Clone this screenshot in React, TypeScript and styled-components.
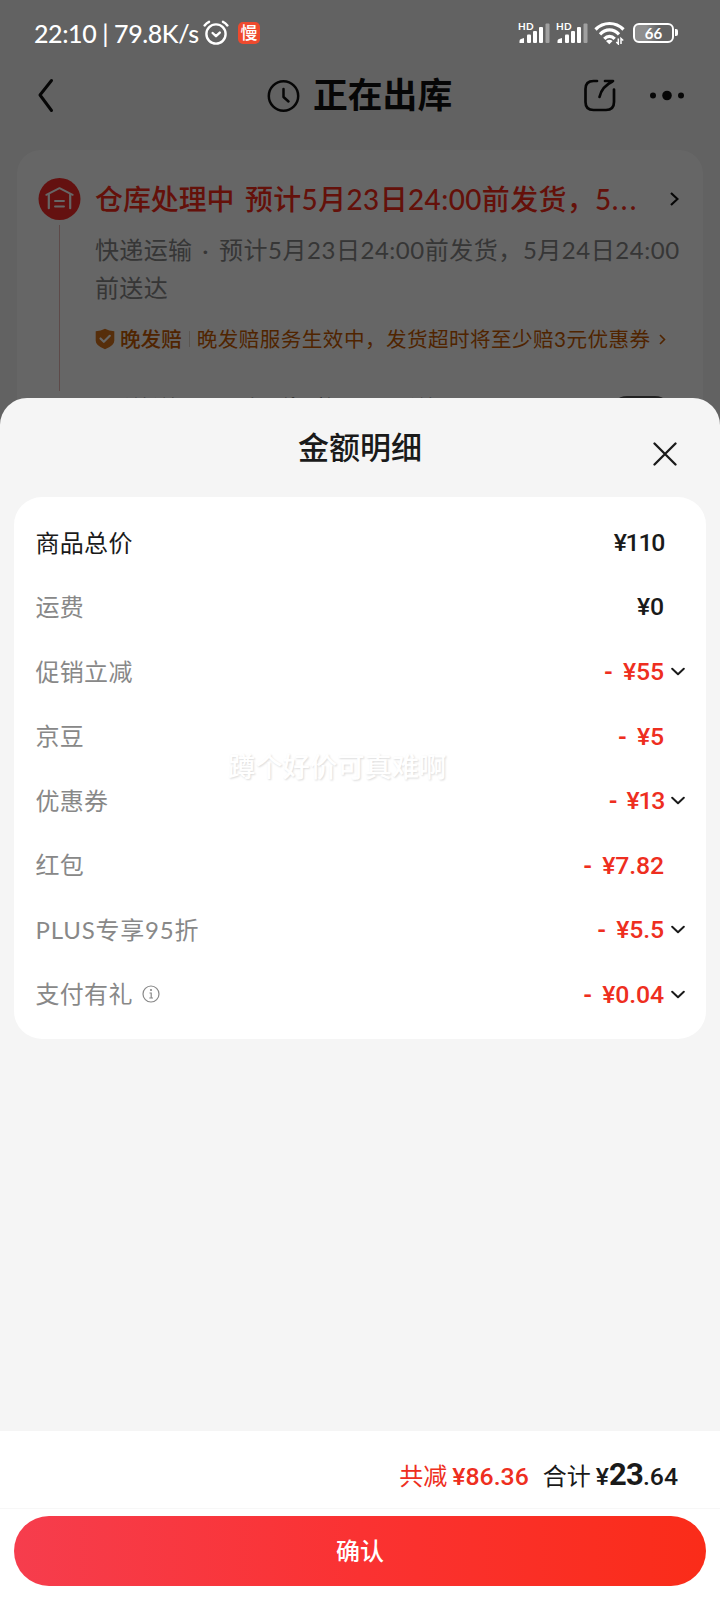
import React from "react";
import styled, { createGlobalStyle } from "styled-components";

const Global = createGlobalStyle`
  * { box-sizing: border-box; }
  body {
    margin: 0;
    background: #f5f5f5;
    font-family: Lato, "Noto Sans CJK SC", sans-serif;
    color: #1a1a1a;
  }
`;

const Screen = styled.div`
  position: relative;
  width: 720px;
  height: 1600px;
  overflow: hidden;
  background: #f5f5f5;
`;

const OrderPage = styled.div`
  height: 420px;
  padding-top: 64px;
  overflow: hidden;
`;

const Mask = styled.div`
  position: absolute;
  inset: 0;
  background: rgba(0, 0, 0, 0.6);
`;

const StatusBar = styled.div`
  position: absolute;
  top: 0;
  left: 0;
  width: 720px;
  height: 66px;
  padding: 0 46px 0 34px;
  display: flex;
  align-items: center;
  color: #fff;
`;

const StatusText = styled.span`
  width: 169px;
  font-size: 25px;
  line-height: 65px;
  letter-spacing: -0.4px;
  font-weight: 500;
  white-space: pre;
`;

const SlowBadge = styled.span`
  width: 22px;
  height: 22px;
  margin-left: 9px;
  border-radius: 5px;
  background: #ee4a2e;
  font-size: 17px;
  font-weight: 500;
  line-height: 21px;
  text-align: center;
`;

const StatusIcons = styled.div`
  margin-left: auto;
  display: flex;
  align-items: center;
`;

const NavBar = styled.div`
  height: 64px;
  padding: 0 35px 0 36px;
  display: flex;
  align-items: center;
`;

const NavTitle = styled.div`
  display: flex;
  align-items: center;
  gap: 13px;
  margin-left: 211px;
  font-size: 34.800px;
  line-height: 48px;
  height: 50px;
  font-weight: 700;
  color: #111;
`;

const NavTitleText = styled.span`
  height: 50px;
`;

const NavActions = styled.div`
  display: flex;
  align-items: center;
  gap: 32px;
  margin-left: auto;
`;

const LogisticsCard = styled.div`
  display: flex;
  margin: 22px 17px 0;
  padding: 28px 21px 0;
  height: 300px;
  border-radius: 24px;
  background: #fff;
`;

const Timeline = styled.div`
  width: 43px;
  display: flex;
  flex-direction: column;
  align-items: center;
`;

const TimelineBar = styled.div`
  width: 1px;
  height: 166px;
  margin-top: 5px;
  background: #e8b9b6;
`;

const LogisticsBody = styled.div`
  flex: 1;
  margin-left: 14px;
`;

const LogisticsTitle = styled.div`
  display: flex;
  align-items: center;
  height: 42px;
  font-size: 27.9px;
  font-weight: 500;
  line-height: 42px;
  word-spacing: -1.8px;
  color: #fa2c19;
  white-space: pre;
`;

const TitleDate = styled.span`
  letter-spacing: 0.42px;
`;

const Ellipsis = styled.span`
  letter-spacing: 2.4px;
`;

const LogisticsText = styled.div`
  margin-top: 11px;
  font-size: 24px;
  letter-spacing: 0.32px;
  word-spacing: 3.6px;
  line-height: 38px;
  color: #888;
  white-space: pre;
`;

const TextDate = styled.span`
  letter-spacing: 0.53px;
`;

const Promise = styled.div`
  display: flex;
  align-items: center;
  margin-top: 17px;
  height: 30px;
  font-size: 20.6px;
  line-height: 30px;
  color: #c85a00;
  white-space: nowrap;
`;

const PromiseName = styled.span`
  margin-left: 5px;
  font-weight: 500;
`;

const PromiseRule = styled.span`
  width: 1px;
  height: 16px;
  margin: 0 7px;
  background: #e2d5c8;
`;

const PromiseText = styled.span`
  letter-spacing: 0.42px;
`;

const AddressRow = styled.div`
  display: flex;
  justify-content: space-between;
  margin-top: 39px;
  padding: 0 10px 0 28px;
  font-size: 27px;
  font-weight: 500;
  line-height: 36px;
  letter-spacing: 1.2px;
  white-space: pre;
`;

const EditPill = styled.span`
  width: 62px;
  height: 34px;
  margin-top: 3px;
  border: 2px solid #555;
  border-radius: 17px;
`;

const Sheet = styled.section`
  position: absolute;
  top: 398px;
  left: 0;
  width: 720px;
  height: 1202px;
  display: flex;
  flex-direction: column;
  border-radius: 27px 27px 0 0;
  background: #f5f5f5;
  overflow: hidden;
`;

const SheetHeader = styled.header`
  display: grid;
  grid-template-columns: 1fr auto 1fr;
  height: 98.500px;
  flex: none;
`;

const SheetTitle = styled.h1`
  grid-column: 2;
  margin: 0;
  font-size: 31px;
  line-height: 98px;
  font-weight: 500;
`;

const CloseButton = styled.button`
  justify-self: end;
  align-self: center;
  display: flex;
  margin: 13px 43px 0 0;
  padding: 0;
  border: 0;
  background: none;
`;

const DetailCard = styled.div`
  position: relative;
  margin: 0 14px;
  height: 542px;
  padding: 14px 21px 0 21.500px;
  border-radius: 28px;
  background: #fff;
`;

const DetailRow = styled.div`
  display: flex;
  align-items: center;
  height: 64.5px;
`;

const Label = styled.span<{ $strong?: boolean; $latin?: boolean }>`
  font-size: 24px;
  letter-spacing: ${(p) => (p.$latin ? "0.8px" : "0.3px")};
  line-height: 36px;
  color: ${(p) => (p.$strong ? "#1a1a1a" : "#888")};
`;

const InfoSlot = styled.span`
  display: flex;
  margin-left: 9px;
`;

const Amount = styled.span<{ $off?: boolean; $tight?: boolean }>`
  margin-left: auto;
  font-family: Roboto, "Noto Sans CJK SC", sans-serif;
  font-size: 24.8px;
  line-height: 36px;
  font-weight: 500;
  letter-spacing: ${(p) => (p.$tight ? "-1.3px" : "-0.1px")};
  color: ${(p) => (p.$off ? "#ee2e20" : "#1a1a1a")};
`;

const Minus = styled.span`
  margin-right: 10px;
  font-family: Lato, sans-serif;
  font-weight: 700;
`;

const ChevronSlot = styled.span`
  width: 21px;
  display: flex;
  justify-content: flex-end;
`;

const Watermark = styled.div`
  position: absolute;
  top: 250px;
  left: 214px;
  font-size: 27.3px;
  line-height: 40px;
  font-weight: 500;
  color: #fff;
  text-shadow: 1px 1px 2px rgba(0, 0, 0, 0.14);
`;

const Footer = styled.footer`
  margin-top: auto;
  height: 169px;
  flex: none;
  background: #fff;
`;

const Summary = styled.div`
  display: flex;
  justify-content: flex-end;
  align-items: baseline;
  height: 78px;
  padding-right: 42px;
  border-bottom: 1px solid #f7f7f7;
  font-size: 24px;
  line-height: 88px;
`;

const SummaryPart = styled.span<{ $off?: boolean }>`
  display: flex;
  align-items: baseline;
  gap: 5px;
  margin-left: 14px;
  color: ${(p) => (p.$off ? "#ee2e20" : "#1a1a1a")};
`;

const SummaryValue = styled.b`
  font-family: Roboto, sans-serif;
  font-size: 24.8px;
  font-weight: 500;
`;

const SummaryBig = styled.span`
  font-size: 31px;
  font-weight: 700;
  letter-spacing: -0.8px;
`;

const Confirm = styled.button`
  display: block;
  width: 692px;
  height: 70px;
  margin: 7px 14px 0;
  padding: 0;
  border: 0;
  border-radius: 35px;
  background: linear-gradient(90deg, #f63d4d 0%, #fa3232 50%, #fa2c19 100%);
  color: #fff;
  font-family: inherit;
  font-size: 24px;
  font-weight: 500;
  line-height: 68px;
`;

const AlarmIcon = () => (
  <svg width="26" height="26" viewBox="0 0 26 26" fill="none" stroke="#fff" strokeWidth="2.4" strokeLinecap="round" strokeLinejoin="round">
    <circle cx="13" cy="14" r="9.6" />
    <path d="M1.6 5.4C3 3.6 4.3 2.6 6 1.8M24.4 5.4C23 3.6 21.7 2.6 20 1.8" />
    <path d="M9.6 13l3.4 3.2 3.8-3.6" />
  </svg>
);

const Hd = styled.span`
  font-size: 10px;
  line-height: 9px;
  font-weight: 700;
  letter-spacing: 0.3px;
`;

const SignalBox = styled.span`
  display: grid;
  width: 38px;
  height: 22px;

  & > * {
    grid-area: 1 / 1;
  }
`;

const Signal = () => (
  <SignalBox>
    <Hd>HD</Hd>
    <svg width="34" height="22" viewBox="0 0 34 22" fill="#fff">
      <path d="M1.5 21v-2q0-1.500 1.500-2l3-1v5z" />
      <rect x="9" y="12.500" width="4" height="8.500" rx="1" />
      <rect x="15" y="9" width="4" height="12" rx="1" />
      <rect x="21" y="5" width="4" height="16" rx="1" />
      <rect x="27.500" y="1.500" width="4" height="19.500" rx="1" opacity=".4" />
    </svg>
  </SignalBox>
);

const WifiIcon = () => (
  <svg width="31" height="24" viewBox="0 0 31 24" fill="none" stroke="#fff" strokeWidth="3.2">
    <path d="M1.500 8.500C9.500 0.500 21.500 0.500 29.500 8.500M6 13.300C11.500 7.500 19.500 7.500 25 13.300M10.300 17.800C13.300 14.600 17.700 14.600 20.700 17.800" />
    <path d="M12 20q3.500-2.400 6.600 0l-3.300 3.200z" fill="#fff" stroke="none" />
    <path d="M24.300 17.500v5.500l-2-2M27 23v-5.500l2.200 2" strokeWidth="1.500" />
  </svg>
);

const Battery = styled.span`
  position: relative;
  display: block;
  width: 41px;
  height: 20px;
  margin-left: 8px;
  border: 2px solid #fff;
  border-radius: 6px;
  background: linear-gradient(90deg, #8e8e8e 30%, transparent 65%);
  font-size: 15px;
  line-height: 16px;
  font-weight: 700;
  text-align: center;

  &::after {
    content: "";
    position: absolute;
    right: -6px;
    top: 4px;
    width: 3px;
    height: 7px;
    border-radius: 0 2px 2px 0;
    background: #fff;
  }
`;

const BackIcon = () => (
  <svg width="20" height="36" viewBox="0 0 20 36" fill="none" stroke="#111" strokeWidth="3" strokeLinecap="round" strokeLinejoin="round">
    <path d="M15.500 2.500L4 17 15.500 32.500" />
  </svg>
);

const ClockIcon = () => (
  <svg width="33" height="33" viewBox="0 0 33 33" fill="none" stroke="#111" strokeWidth="2.500" strokeLinecap="round" strokeLinejoin="round">
    <circle cx="16.500" cy="16" r="14.700" />
    <path d="M16.500 9v8l5 4.500" />
  </svg>
);

const ShareIcon = () => (
  <svg width="34" height="34" viewBox="0 0 34 34" fill="none" stroke="#111" strokeWidth="2.700" strokeLinecap="round" strokeLinejoin="round">
    <path d="M14 2H10.500Q2.500 2 2.500 10v13q0 8 8 8h12.500q8 0 8-8V10.500" />
    <path d="M22 2h8M29.500 2.500C22 6 18 11 16.500 18" />
  </svg>
);

const MoreIcon = () => (
  <svg width="36" height="12" viewBox="0 0 36 12" fill="#111">
    <circle cx="4" cy="5.500" r="3" />
    <circle cx="18" cy="5.500" r="4.800" />
    <circle cx="32" cy="5.500" r="3" />
  </svg>
);

const WarehouseIcon = () => (
  <svg width="43" height="42" viewBox="0 0 43 42" fill="none" stroke="#fff" strokeWidth="1.900" strokeLinecap="round" strokeLinejoin="round">
    <circle cx="21.500" cy="21" r="21" fill="#fa2c28" stroke="none" />
    <path d="M8.300 16.800L21.500 10.200 34.700 16.800" />
    <path d="M10.800 16.500V30.200M32.200 16.500V30.200" strokeWidth="2.200" />
    <path d="M17 23h9M17 28.500h9" />
  </svg>
);

const ShieldIcon = () => (
  <svg width="20" height="22" viewBox="0 0 20 22" fill="none">
    <path d="M10 .800Q14 3 19.300 3.200v9.500q0 5-9.300 8.500Q.700 17.700.700 12.700V3.200Q6 3 10 .800z" fill="#d8731c" />
    <path d="M5.500 10.500l3.300 3.300 6-6" stroke="#fff" strokeWidth="2.200" strokeLinecap="round" strokeLinejoin="round" />
  </svg>
);

const RightIcon = ({ w, h, sw, color }: { w: number; h: number; sw: number; color: string }) => (
  <svg width={w} height={h} viewBox={`0 0 ${w} ${h}`} fill="none" stroke={color} strokeWidth={sw}>
    <path d={`M1 1L${w - 1.5} ${h / 2}L1 ${h - 1}`} />
  </svg>
);

const TitleArrow = styled.span`
  display: flex;
  margin-left: auto;
  margin-right: 3px;
`;

const PromiseArrow = styled.span`
  display: flex;
  margin-left: 9px;
`;

const CloseIcon = () => (
  <svg width="24" height="24" viewBox="0 0 24 24" stroke="#1a1a1a" strokeWidth="2.300" strokeLinecap="round">
    <path d="M1.500 1.500l21 21M22.500 1.500l-21 21" />
  </svg>
);

const DownIcon = () => (
  <svg width="14" height="9" viewBox="0 0 14 9" fill="none" stroke="#1a1a1a" strokeWidth="2" strokeLinecap="round" strokeLinejoin="round">
    <path d="M1.200 1.800L7 7.200l5.800-5.400" />
  </svg>
);

const InfoIcon = () => (
  <svg width="18" height="18" viewBox="0 0 18 18" fill="none" stroke="#888" strokeWidth="1.200">
    <circle cx="9" cy="9" r="8" />
    <path d="M7.500 8h1.700v5M7.300 13h3.700" />
    <circle cx="9" cy="5" r="1.100" fill="#888" stroke="none" />
  </svg>
);

type Item = {
  label: string;
  value: string;
  off?: boolean;
  open?: boolean;
  info?: boolean;
  strong?: boolean;
  latin?: boolean;
};

const items: Item[] = [
  { label: "商品总价", value: "¥110", strong: true },
  { label: "运费", value: "¥0" },
  { label: "促销立减", value: "¥55", off: true, open: true },
  { label: "京豆", value: "¥5", off: true },
  { label: "优惠券", value: "¥13", off: true, open: true },
  { label: "红包", value: "¥7.82", off: true },
  { label: "PLUS专享95折", value: "¥5.5", off: true, open: true, latin: true },
  { label: "支付有礼", value: "¥0.04", off: true, open: true, info: true },
];

export default function App() {
  return (
    <Screen>
      <Global />
      <OrderPage>
        <NavBar>
          <BackIcon />
          <NavTitle>
            <ClockIcon />
            <NavTitleText>正在出库</NavTitleText>
          </NavTitle>
          <NavActions>
            <ShareIcon />
            <MoreIcon />
          </NavActions>
        </NavBar>
        <LogisticsCard>
          <Timeline>
            <WarehouseIcon />
            <TimelineBar />
          </Timeline>
          <LogisticsBody>
            <LogisticsTitle>
              <span>
                仓库处理中{"  "}
                <TitleDate>预计5月23日24:00前发货，5</TitleDate>
                <Ellipsis>...</Ellipsis>
              </span>
              <TitleArrow>
                <RightIcon w={9} h={14} sw={2.2} color="#111" />
              </TitleArrow>
            </LogisticsTitle>
            <LogisticsText>
              快递运输 · <TextDate>预计5月23日24:00前发货，5月24日24:00</TextDate>
              {"\n前送达"}
            </LogisticsText>
            <Promise>
              <ShieldIcon />
              <PromiseName>晚发赔</PromiseName>
              <PromiseRule />
              <PromiseText>晚发赔服务生效中，发货超时将至少赔3元优惠券</PromiseText>
              <PromiseArrow>
                <RightIcon w={7} h={11} sw={1.6} color="#c85a00" />
              </PromiseArrow>
            </Promise>
            <AddressRow>
              <span>送送 口城化 街道北 元 送</span>
              <EditPill />
            </AddressRow>
          </LogisticsBody>
        </LogisticsCard>
      </OrderPage>
      <Mask />
      <StatusBar>
        <StatusText>22:10 | 79.8K/s</StatusText>
        <AlarmIcon />
        <SlowBadge>慢</SlowBadge>
        <StatusIcons>
          <Signal />
          <Signal />
          <WifiIcon />
          <Battery>66</Battery>
        </StatusIcons>
      </StatusBar>
      <Sheet>
        <SheetHeader>
          <SheetTitle>金额明细</SheetTitle>
          <CloseButton aria-label="关闭">
            <CloseIcon />
          </CloseButton>
        </SheetHeader>
        <DetailCard>
          {items.map((it) => (
            <DetailRow key={it.label}>
              <Label $strong={it.strong} $latin={it.latin}>
                {it.label}
              </Label>
              {it.info && (
                <InfoSlot>
                  <InfoIcon />
                </InfoSlot>
              )}
              <Amount $off={it.off} $tight={it.value.includes("1")}>
                {it.off && <Minus>-</Minus>}
                {it.value}
              </Amount>
              <ChevronSlot>{it.open && <DownIcon />}</ChevronSlot>
            </DetailRow>
          ))}
          <Watermark>蹲个好价可真难啊</Watermark>
        </DetailCard>
        <Footer>
          <Summary>
            <SummaryPart $off>
              共减<SummaryValue>¥86.36</SummaryValue>
            </SummaryPart>
            <SummaryPart>
              合计
              <SummaryValue>
                ¥<SummaryBig>23</SummaryBig>.64
              </SummaryValue>
            </SummaryPart>
          </Summary>
          <Confirm>确认</Confirm>
        </Footer>
      </Sheet>
    </Screen>
  );
}
